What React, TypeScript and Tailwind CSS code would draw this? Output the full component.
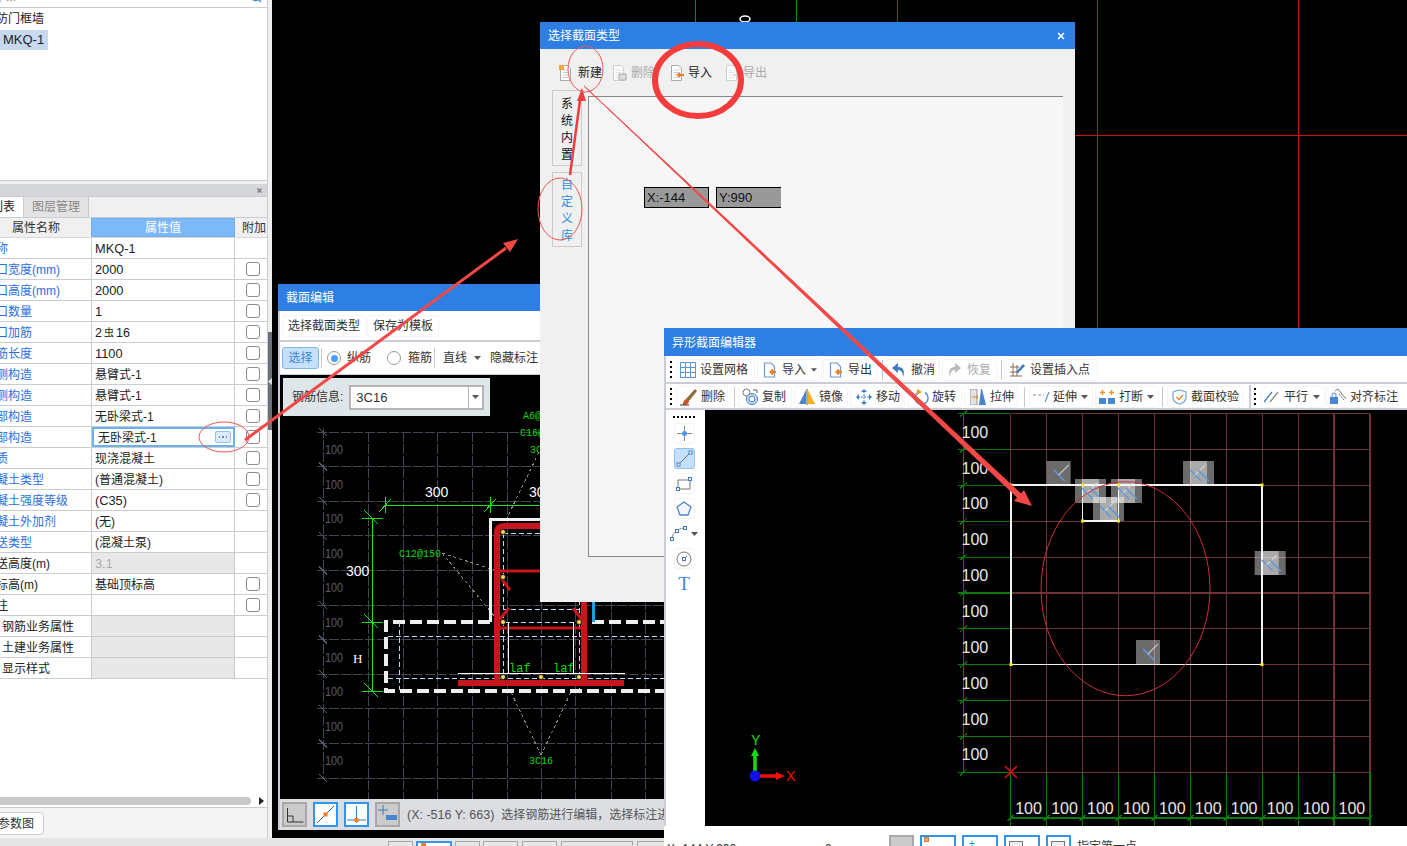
import React from 'react';
import { Search, X } from 'lucide-react';

type Row = {
  label: string;
  value?: string;
  check?: boolean;
  black?: boolean;
  gray?: boolean;
  flush?: boolean;
};

const ROWS: Row[] = [
  { label: '名称', value: 'MKQ-1' },
  { label: '洞口宽度(mm)', value: '2000', check: true },
  { label: '洞口高度(mm)', value: '2000', check: true },
  { label: '洞口数量', value: '1', check: true },
  { label: '洞口加筋', value: '2虫16', check: true },
  { label: '钢筋长度', value: '1100', check: true },
  { label: '内侧构造', value: '悬臂式-1', check: true },
  { label: '外侧构造', value: '悬臂式-1', check: true },
  { label: '顶部构造', value: '无卧梁式-1', check: true },
  { label: '底部构造', value: '无卧梁式-1', check: true },
  { label: '材质', value: '现浇混凝土', check: true },
  { label: '混凝土类型', value: '(普通混凝土)', check: true },
  { label: '混凝土强度等级', value: '(C35)', check: true },
  { label: '混凝土外加剂', value: '(无)' },
  { label: '泵送类型', value: '(混凝土泵)' },
  { label: '泵送高度(m)', value: '3.1', black: true, gray: true },
  { label: '底标高(m)', value: '基础顶标高', check: true, black: true },
  { label: '备注', value: '', check: true, black: true },
  { label: '钢筋业务属性', black: true, gray: true, flush: true },
  { label: '土建业务属性', black: true, gray: true, flush: true },
  { label: '显示样式', black: true, gray: true, flush: true },
];

const CAD_Y = Array.from({ length: 11 }, (_, i) => 432 + i * 34.6);
const CAD_X = [368, 403, 437, 472, 507, 541, 575, 611, 645];
const CAD_LABEL_Y = [449, 484, 518, 553, 587, 622, 657, 691, 726, 760];
const GRID_X = Array.from({ length: 11 }, (_, i) => 1010.7 + i * 35.93);
const GRID_Y = Array.from({ length: 11 }, (_, i) => 413.7 + i * 35.85);
const SECTION_POINTS = [
  [1011, 485],
  [1262, 485],
  [1262, 664.6],
  [1011, 664.6],
  [1082.6, 485],
  [1118.5, 485],
  [1082.6, 521],
  [1118.5, 521],
];
const MARKERS = [
  { x: 1046.7, y: 461, double: false },
  { x: 1075, y: 479, double: true },
  { x: 1111, y: 479, double: true },
  { x: 1093, y: 497, double: true },
  { x: 1183, y: 461, double: true },
  { x: 1254.7, y: 551, double: true },
  { x: 1136, y: 640, double: false },
];

const Caret = ({ className = '' }: { className?: string }) => (
  <svg width="7" height="4" viewBox="0 0 7 4" className={className}>
    <path d="M0 0h7L3.5 4z" fill="#555" />
  </svg>
);

const Grip = ({ className = '' }: { className?: string }) => (
  <div className={`flex h-[17px] w-[10px] flex-col justify-between ${className}`}>
    {[0, 1, 2, 3].map((i) => (
      <div key={i} className="h-[2px] w-[2px] bg-black" />
    ))}
  </div>
);

const Sep = ({ className = '' }: { className?: string }) => (
  <div className={`h-[20px] w-px shrink-0 bg-[#c6c9ce] ${className}`} />
);

const Btn = ({
  icon,
  label,
  muted,
  caret,
  className = '',
}: {
  icon?: React.ReactNode;
  label: string;
  muted?: boolean;
  caret?: boolean;
  className?: string;
}) => (
  <div
    className={`flex h-[22px] shrink-0 items-center rounded-[3px] border border-[#f5f5f5] ${
      muted ? 'text-[#aaa]' : 'text-[#333]'
    } ${className}`}
  >
    {icon}
    <span className="whitespace-nowrap">{label}</span>
    {caret && <Caret className="mr-[4px] ml-auto" />}
  </div>
);

const FileIcon = ({ muted, arrow = true }: { muted?: boolean; arrow?: boolean }) => (
  <svg width="14" height="16" viewBox="0 0 14 16" className="shrink-0">
    <path
      d="M1.5 1h6.5l3.5 3.5V15h-10z"
      fill="#fff"
      stroke={muted ? '#ccc' : '#6b9bd6'}
      strokeWidth="1.2"
    />
    {arrow && <path d="M13 10H8M10 7.5 7.5 10l2.5 2.5" stroke={muted ? '#ddd' : '#ee7f22'} strokeWidth="2" fill="none" />}
  </svg>
);

const GrayDoc = ({ muted, children }: { muted?: boolean; children?: React.ReactNode }) => (
  <svg width="15" height="16" viewBox="0 0 15 16" className="shrink-0">
    <path d="M1.5.5h7l3 3v12h-10z" fill="#fff" stroke={muted ? '#cfcfcf' : '#aaa'} />
    <path d="M3.5 5h6M3.5 7.500h6M3.500 10h6M3.500 12.500h6" stroke={muted ? '#e2e2e2' : '#ccc'} />
    {children}
  </svg>
);

const ToolFrame = ({ children, active }: { children: React.ReactNode; active?: boolean }) => (
  <div
    className={`flex h-[21px] w-[21px] shrink-0 items-center justify-center rounded-[3px] border ${
      active ? 'border-[#8fc0f5] bg-[#c5e0fb]' : 'border-[#f3f3f3] bg-white'
    }`}
  >
    {children}
  </div>
);

const CellValue = ({ value = '' }: { value?: string }) => {
  if (value === '2虫16') {
    return (
      <span className="text-[12.500px]">
        2<span className="relative -top-[1px] mx-[2px] text-[10px]">虫</span>16
      </span>
    );
  }
  return <span className={/^[\x20-\x7e]*$/.test(value) ? 'text-[12.800px]' : ''}>{value}</span>;
};

const PropertyRow = ({ row, selected }: { row: Row; selected: boolean }) => (
  <div className="flex h-[21px] border-b border-[#c9ccd1] leading-[22px]">
    <div className="w-[92px] shrink-0 overflow-hidden border-r border-[#c9ccd1]">
      <div
        className={`whitespace-nowrap ${row.flush ? 'ml-[2px]' : '-ml-[16px]'} ${
          row.black ? 'text-[#222]' : 'text-[#2b6ee0]'
        }`}
      >
        {row.label}
      </div>
    </div>
    {selected ? (
      <div className="flex w-[143px] shrink-0 items-center border-2 border-[#6db0ee] pl-[4px] text-[#222]">
        <span className="pt-[1px]">{row.value}</span>
        <div className="mr-[2px] ml-auto flex h-[12px] w-[16px] items-center justify-center gap-[2px] rounded-[2px] border border-[#8fc0f5] bg-[#dcecfc]">
          <div className="h-[1.500px] w-[1.500px] bg-[#5e86c0]" />
          <div className="h-[1.500px] w-[1.500px] bg-[#5e86c0]" />
          <div className="h-[1.500px] w-[1.500px] bg-[#5e86c0]" />
        </div>
      </div>
    ) : (
      <div
        className={`w-[143px] shrink-0 border-r border-[#c9ccd1] pl-[3px] ${
          row.gray ? 'bg-[#e8e8e8] text-[#aaa]' : 'text-[#222]'
        }`}
      >
        <CellValue value={row.value} />
      </div>
    )}
    <div className="flex flex-1 items-center justify-center pl-[4px]">
      {row.check && <div className="h-[14px] w-[14px] rounded-[3px] border border-[#8a8a8a] bg-white" />}
    </div>
  </div>
);

const LeftPanel = () => (
  <aside className="flex w-[268px] shrink-0 flex-col overflow-hidden border-r border-[#c9ccd1] bg-[#f0f0f0]">
    <div className="relative h-[8px] shrink-0 overflow-hidden border-b border-[#c9ccd1] bg-white">
      <div className="-mt-[12px] -ml-[6px] text-[#888]">单...</div>
      <Search className="absolute -top-[9px] right-[5px] h-[12px] w-[12px] text-[#3d8fd6]" strokeWidth={3} />
    </div>
    <div className="h-[173px] shrink-0 overflow-hidden border-b border-[#c9ccd1] bg-white pt-[1px]">
      <div className="-ml-[16px] h-[20px] leading-[20px] whitespace-nowrap text-[#222]">人防门框墙</div>
      <div className="mt-[1px] h-[20px] w-[48px] bg-[#c8d8f0] pl-[3px] text-[13px] leading-[20px] text-[#222]">MKQ-1</div>
    </div>
    <div className="h-[3px] shrink-0" />
    <div className="flex h-[12px] shrink-0 items-center justify-end bg-[#d4d6da] pr-[4px]">
      <X className="h-[7px] w-[7px] text-[#777]" strokeWidth={4} />
    </div>
    <div className="flex h-[22px] shrink-0 border-y border-[#c9ccd1] bg-[#f0f0f0] leading-[20px]">
      <div className="w-[24px] overflow-hidden border-r border-[#c9ccd1] bg-white">
        <div className="-ml-[33px] whitespace-nowrap text-[#222]">属性列表</div>
      </div>
      <div className="w-[65px] border-r border-[#c9ccd1] bg-[#e3e3e3] pl-[8px] text-[#888]">图层管理</div>
    </div>
    <div className="flex h-[20px] shrink-0 border-b border-[#d8d8d8] bg-[#f0f0f0] leading-[21px]">
      <div className="w-[91px] pl-[12px] text-[#333]">属性名称</div>
      <div className="w-[144px] border border-[#6db0ee] bg-[#7db8f8] text-center leading-[19px] text-white">属性值</div>
      <div className="pl-[7px] text-[#333]">附加</div>
    </div>
    <div className="flex-1 bg-white">
      {ROWS.map((row, i) => (
        <PropertyRow key={row.label} row={row} selected={i === 9} />
      ))}
    </div>
    <div className="flex h-[14px] shrink-0 items-start border-b border-[#c9ccd1] bg-white pt-[3px]">
      <div className="h-[8px] w-[251px] rounded-r-full bg-[#c8c8c8]" />
      <svg width="5" height="8" viewBox="0 0 5 8" className="ml-[8px]">
        <path d="M0 0l5 4-5 4z" fill="#222" />
      </svg>
    </div>
    <div className="h-[30px] shrink-0 bg-[#f4f4f4] pt-[4px]">
      <div className="-ml-[4px] h-[23px] w-[48px] rounded-[4px] border border-[#c9ccd1] bg-white pl-[1px] leading-[22px] text-[#333]">
        参数图
      </div>
    </div>
  </aside>
);

const CadDrawing = () => (
  <svg
    width="384"
    height="424"
    viewBox="280 375 384 424"
    className="block"
    fontFamily="'Liberation Sans', sans-serif"
    shapeRendering="crispEdges"
  >
    <g stroke="#3f4552" strokeDasharray="10 2">
      {CAD_Y.map((y) => (
        <line key={y} x1="317" x2="664" y1={y} y2={y} />
      ))}
      <line x1="323" x2="323" y1="428" y2="778" />
      {CAD_X.map((x) => (
        <line key={x} x1={x} x2={x} y1="432" y2="799" />
      ))}
    </g>
    <g stroke="#5a6070">
      {CAD_Y.map((y) => (
        <line key={y} x1="319" x2="327" y1={y - 4} y2={y + 4} />
      ))}
    </g>
    {CAD_LABEL_Y.map((y) => (
      <text key={y} x="325" y={y + 5} fontSize="12" fill="#5a5f6a" textLength="18" lengthAdjust="spacingAndGlyphs">
        100
      </text>
    ))}

    <g stroke="#1fe01f" fill="none">
      <path d="M372 518v174M385 505h155M362 518h21M362 622h21M362 691h21" />
      <path d="M385 497v16M490 497v16M379 512l12-13M484 512l12-13M364 510l14 14M364 614l14 14M364 683l14 14" />
    </g>
    <g fill="#fff" fontSize="14">
      <text x="425" y="497">300</text>
      <text x="529" y="497">300</text>
      <text x="346" y="576">300</text>
      <text x="353" y="663" fontFamily="'Liberation Serif', serif" fontSize="13">H</text>
    </g>
    <g fill="#10d810" fontFamily="'Liberation Mono', monospace" fontSize="10">
      <text x="399" y="557">C12@150</text>
      <text x="523" y="419">A6@200</text>
      <text x="520" y="436">C16@200</text>
      <text x="530" y="453">3C16</text>
      <text x="529" y="764">3C16</text>
      <text x="509" y="672" fontSize="12">laf</text>
      <text x="553" y="672" fontSize="12">laf</text>
    </g>

    <g stroke="#888" strokeDasharray="3 3" fill="none">
      <path d="M442 553l55 18M442 553l58 70M541 755l-31-65M541 755l31-65M506 520l34-70" />
    </g>
    <path d="M490 622V519h60" stroke="#f2f2f2" strokeWidth="3" fill="none" />
    <path d="M490 622H386v69h278M592 622h72" stroke="#efefef" strokeWidth="4" strokeDasharray="12 5" fill="none" />
    <g stroke="#bcdcff" strokeDasharray="5 3" fill="none">
      <path d="M503 533v148M579 600v90M399 622v68M503 533h40M503 609h77M388 636h276M388 678h276M505 622h72" />
    </g>
    <path d="M593 602v20" stroke="#0ea5e9" strokeWidth="3" />
    <g stroke="#c8161d" fill="none" shapeRendering="auto">
      <path d="M497 680V533q0-7 7-7h40" strokeWidth="6" />
      <path d="M584 680v-84" strokeWidth="6" />
      <path d="M458 683h166" strokeWidth="6" />
      <path d="M498 571h44M498 628h84" strokeWidth="3" />
      <path d="M499 575l11 15M499 620l10-12M582 620l-9-12" strokeWidth="3" />
    </g>
    <path d="M508 622v51M573 622v51M458 673h167" stroke="#fff" fill="none" />
    <g fill="#ffd84a" stroke="#222" shapeRendering="auto">
      {[
        [503, 532],
        [503, 577],
        [503, 622],
        [579, 622],
        [503, 677],
        [541, 677],
        [579, 677],
      ].map(([x, y]) => (
        <circle key={`${x}-${y}`} cx={x} cy={y} r="2.500" />
      ))}
    </g>
  </svg>
);

const SectionEditor = () => (
  <section className="absolute top-[284px] left-[278px] flex h-[546px] w-[386px] flex-col border-l-2 border-[#c9ced6] bg-[#dcdde0] text-[12px]">
    <div className="-ml-[2px] flex h-[27px] shrink-0 items-center bg-[#2d7fe3] pl-[8px] text-white">截面编辑</div>
    <div className="flex h-[29px] shrink-0 items-center bg-white pt-[1px]">
      <Btn label="选择截面类型" className="ml-[2px] w-[84px] justify-center" />
      <Btn label="保存为模板" className="ml-[1px] w-[72px] justify-center" />
    </div>
    <div className="h-[2px] shrink-0 bg-[#c9ced6]" />
    <div className="flex h-[33px] shrink-0 items-center border-b border-[#c9ced6] bg-white text-[#333]">
      <div className="ml-[2px] flex h-[22px] w-[37px] items-center justify-center rounded-[3px] border border-[#7fb6ef] bg-[#c5e0fb] text-[#3a86d8]">
        选择
      </div>
      <Sep className="ml-[2px]" />
      <div className="ml-[5px] flex h-[14px] w-[14px] items-center justify-center rounded-full border border-[#999]">
        <div className="h-[7px] w-[7px] rounded-full bg-[#4a9eff]" />
      </div>
      <span className="ml-[6px]">纵筋</span>
      <div className="ml-[16px] h-[14px] w-[14px] rounded-full border border-[#999]" />
      <span className="ml-[7px]">箍筋</span>
      <Sep className="ml-[2px]" />
      <span className="ml-[8px]">直线</span>
      <Caret className="ml-[7px]" />
      <span className="ml-[9px] whitespace-nowrap">隐藏标注</span>
    </div>
    <div className="relative h-[424px] shrink-0 overflow-hidden bg-black">
      <CadDrawing />
      <div className="absolute top-[3px] left-[3px] flex h-[38px] w-[207px] items-center bg-[#dfe6e9] pl-[9px] text-[#333]">
        钢筋信息:
        <div className="ml-[6px] flex h-[25px] w-[135px] items-center border-2 border-[#b4b4b4] bg-white pt-[2px] pl-[5px] text-[13px]">
          3C16
          <div className="-mt-[2px] ml-auto flex h-[21px] w-[14px] items-center justify-center border-l border-[#b4b4b4]">
            <Caret />
          </div>
        </div>
      </div>
    </div>
    <div className="flex h-[31px] shrink-0 items-center overflow-hidden pl-[2px]">
      <div className="flex h-[25px] w-[25px] shrink-0 items-center justify-center border-2 border-[#a8a8a8] bg-[#cbcbcb]">
        <svg width="18" height="16" viewBox="0 0 18 16">
          <path d="M1.500 1v14h16M1.500 9H7v6" stroke="#333" fill="none" />
        </svg>
      </div>
      <div className="ml-[6px] flex h-[25px] w-[25px] shrink-0 items-center justify-center border-2 border-[#2f96f0] bg-white">
        <svg width="21" height="21" viewBox="0 0 21 21">
          <path d="M2 19 19 2" stroke="#3d5f8f" />
          <rect x="8.500" y="8.500" width="4" height="4" fill="#ee7f22" />
        </svg>
      </div>
      <div className="ml-[6px] flex h-[25px] w-[25px] shrink-0 items-center justify-center border-2 border-[#2f96f0] bg-white">
        <svg width="21" height="21" viewBox="0 0 21 21">
          <path d="M10.500 2v17M1 16h19" stroke="#3d78c0" />
          <rect x="8.500" y="14" width="4" height="4" fill="#ee7f22" />
        </svg>
      </div>
      <div className="ml-[6px] flex h-[25px] w-[25px] shrink-0 items-center justify-center border-2 border-[#a8a8a8] bg-[#cbcbcb]">
        <svg width="21" height="21" viewBox="0 0 21 21">
          <path d="M6 1v10M1 6h10" stroke="#3d78c0" />
          <rect x="9" y="11" width="11" height="5" fill="#4a86d0" />
        </svg>
      </div>
      <span className="ml-[7px] pt-[1px] text-[12.500px] whitespace-nowrap text-[#555]">(X: -516 Y: 663)</span>
      <span className="ml-[7px] pt-[1px] whitespace-nowrap text-[#555]">选择钢筋进行编辑，选择标注进行编辑</span>
    </div>
  </section>
);

const TypeDialog = () => (
  <section className="absolute top-[22px] left-[540px] flex h-[580px] w-[535px] flex-col bg-[#f0f0f0] text-[12px]">
    <div className="flex h-[27px] shrink-0 items-center justify-between bg-[#2d7fe3] pr-[9px] pl-[8px] text-white">
      选择截面类型
      <X className="h-[10px] w-[10px] text-white" strokeWidth={4} />
    </div>
    <div className="flex h-[41px] shrink-0 items-center pt-[7px] pl-[19px]">
      <GrayDoc>
        <rect x="0" y="0" width="5" height="5" fill="#f3a83a" />
      </GrayDoc>
      <span className="ml-[4px] text-[#222]">新建</span>
      <div className="ml-[10px]">
        <GrayDoc muted>
          <path d="M7 9h7v6H7z" fill="#ddd" stroke="#aaa" />
        </GrayDoc>
      </div>
      <span className="ml-[4px] text-[#aaa]">删除</span>
      <div className="ml-[15px]">
        <GrayDoc>
          <path d="M14 10H8M10 8l-2 2 2 2" stroke="#ee7f22" strokeWidth="2" fill="none" />
        </GrayDoc>
      </div>
      <span className="ml-[3px] text-[#222]">导入</span>
      <div className="ml-[13px]">
        <GrayDoc muted>
          <path d="M8 10h6M12 8l2 2-2 2" stroke="#ddd" strokeWidth="2" fill="none" />
        </GrayDoc>
      </div>
      <span className="ml-[3px] text-[#aaa]">导出</span>
    </div>
    <div className="flex flex-1 items-start pl-[12px]">
      <div className="flex w-[30px] shrink-0 flex-col gap-[6px]">
        <div className="h-[76px] border border-[#cccccc] pt-[5px] text-center leading-[17px] text-[#111]">
          <div className="mx-auto w-[12px] break-all">系统内置</div>
        </div>
        <div className="h-[75px] border border-[#cccccc] pt-[4px] text-center leading-[17px] text-[#2f8fe0]">
          <div className="mx-auto w-[12px] break-all">自定义库</div>
        </div>
      </div>
      <div className="mt-[6px] ml-[6px] flex h-[461px] w-[475px] items-start gap-[7px] border-y border-l border-[#888] bg-[#f6f6f6] pt-[90px] pl-[55px] text-[13px] text-[#111]">
        <div className="flex h-[21px] w-[65px] items-center border border-black bg-[#999] pl-[2px]">X:-144</div>
        <div className="flex h-[21px] w-[65px] items-center border-y border-l border-black bg-[#999] pl-[2px]">Y:990</div>
      </div>
    </div>
  </section>
);

const GridDrawing = () => (
  <svg
    width="702"
    height="416"
    viewBox="705 410 702 416"
    className="block"
    fontFamily="'Liberation Sans', sans-serif"
  >
    <g stroke="#6b3338" strokeWidth="1.200" shapeRendering="crispEdges">
      {GRID_X.map((x) => (
        <line key={x} x1={x} x2={x} y1="413.700" y2="772" />
      ))}
      {GRID_Y.map((y) => (
        <line key={y} x1="1010.700" x2="1370" y1={y} y2={y} />
      ))}
    </g>
    <g stroke="#0a7a0a" strokeWidth="1.200" shapeRendering="crispEdges">
      <line x1="963.500" x2="963.500" y1="413.700" y2="772" />
      <line x1="1010.700" x2="1370" y1="818" y2="818" />
      {GRID_Y.map((y) => (
        <g key={y}>
          <line x1="958" x2="1010" y1={y} y2={y} />
          <line x1="960" x2="967" y1={y + 3} y2={y - 3} />
        </g>
      ))}
      {GRID_X.map((x) => (
        <g key={x}>
          <line x1={x} x2={x} y1="772" y2="826" />
          <line x1={x - 3} x2={x + 3} y1="821" y2="815" />
        </g>
      ))}
    </g>
    <g fill="#e8e8e8" fontSize="16">
      {GRID_Y.slice(0, 10).map((y) => (
        <text key={y} x="961.500" y={y + 24}>
          100
        </text>
      ))}
      {GRID_X.slice(0, 10).map((x) => (
        <text key={x} x={x + 4.5} y="814">
          100
        </text>
      ))}
    </g>
    <path d="M1005 766l12 12M1017 766l-12 12" stroke="#e01010" strokeWidth="1.500" />

    <path
      d="M1011 485h251v179.600H1011zM1082.600 485v36h35.900v-36"
      fill="none"
      stroke="#f2f2f2"
      strokeWidth="1.600"
      shapeRendering="crispEdges"
    />
    {MARKERS.map((m) => (
      <g key={`${m.x}-${m.y}`}>
        <rect x={m.x} y={m.y} width="24" height="24" fill="#fff" opacity="0.42" />
        {m.double && <rect x={m.x + 7} y={m.y} width="24" height="24" fill="#fff" opacity="0.42" />}
        <path d={`M${m.x + 7} ${m.y + 9}l11 11`} stroke="#5b9bdf" strokeWidth="1.500" />
        <path d={`M${m.x + 12} ${m.y + 14}l10-10`} stroke="#ddd" strokeWidth="1.500" opacity="0.7" />
        {m.double && <path d={`M${m.x + 15} ${m.y + 9}l11 11`} stroke="#5b9bdf" strokeWidth="1.500" />}
      </g>
    ))}
    {SECTION_POINTS.map(([x, y]) => (
      <rect key={`${x}-${y}`} x={x - 1.5} y={y - 1.5} width="3" height="3" fill="#ffe81a" />
    ))}
    <ellipse cx="1125.500" cy="588.700" rx="84.500" ry="107" fill="none" stroke="#c93036" />

    <path d="M755 772v-16" stroke="#10e010" strokeWidth="3.500" />
    <path d="M755 748l-4 8h8z" fill="#10e010" />
    <path d="M757 776h20" stroke="#f01010" strokeWidth="3.500" />
    <path d="M785 776l-9-4v8z" fill="#f01010" />
    <circle cx="755" cy="776" r="5.500" fill="#1010e8" />
    <text x="751" y="745" fontSize="14" fill="#10e010">
      Y
    </text>
    <text x="786" y="781" fontSize="14" fill="#f01010">
      X
    </text>
  </svg>
);

const ShapeEditor = () => (
  <section className="absolute top-[328px] left-[664px] flex h-[518px] w-[743px] flex-col border-l-2 border-[#c9ced6] bg-[#c9ced6] text-[12px]">
    <div className="-ml-[2px] flex h-[28px] shrink-0 items-center bg-[#2d7fe3] pt-[2px] pl-[8px] text-white">异形截面编辑器</div>
    <div className="flex h-[26px] shrink-0 items-center bg-white pt-[1px]">
      <Grip className="pl-[4px]" />
      <Btn
        label="设置网格"
        className="w-[79px] gap-[4px] pl-[3px]"
        icon={
          <svg width="16" height="16" viewBox="0 0 16 16" className="shrink-0">
            <path d="M.5.500h15v15H.500zM5.500.500v15M10.500.500v15M.500 5.500h15M.500 10.500h15" stroke="#5a96d8" fill="none" />
          </svg>
        }
      />
      <Btn label="导入" caret className="ml-[2px] w-[65px] gap-[5px] pl-[5px]" icon={<FileIcon />} />
      <Btn label="导出" className="ml-[1px] w-[55px] gap-[5px] pl-[5px]" icon={<FileIcon />} />
      <Sep className="ml-[4px]" />
      <Btn
        label="撤消"
        className="ml-[3px] w-[54px] gap-[6px] pl-[5px]"
        icon={
          <svg width="13" height="14" viewBox="0 0 13 14" className="shrink-0">
            <path d="M6 0 0 5l6 5V7c3 0 5 2 5 7 2-5 1-10-5-10z" fill="#3f7cc4" />
          </svg>
        }
      />
      <Btn
        label="恢复"
        muted
        className="ml-[2px] w-[55px] gap-[6px] pl-[5px]"
        icon={
          <svg width="13" height="14" viewBox="0 0 13 14" className="shrink-0">
            <path d="M7 0l6 5-6 5V7c-3 0-5 2-5 7-2-5-1-10 5-10z" fill="#bbb" />
          </svg>
        }
      />
      <Sep className="ml-[4px]" />
      <Btn
        label="设置插入点"
        className="ml-[2px] w-[94px] gap-[5px] pl-[5px]"
        icon={
          <svg width="15" height="15" viewBox="0 0 15 15" className="shrink-0">
            <path d="M0 5h9M0 10h9M3 1v13M7 3v11M0 14h12" stroke="#8a6a5a" fill="none" />
            <path d="M6 10 13 2l2 2-7 7z" fill="#3f7cc4" />
          </svg>
        }
      />
    </div>
    <div className="h-[2px] shrink-0" />
    <div className="flex h-[24px] shrink-0 items-center bg-white pt-[1px]">
      <Grip className="pl-[4px]" />
      <Btn
        label="删除"
        className="w-[52px] gap-[3px] pl-[3px]"
        icon={
          <svg width="18" height="18" viewBox="0 0 18 18" className="shrink-0">
            <path d="M6 11 15 1l2 2-8 10z" fill="#8a6a3a" />
            <path d="M3 17c0-3 1-6 4-6l2 2c0 3-3 4-6 4z" fill="#d0501e" />
            <path d="M0 17h9" stroke="#333" />
          </svg>
        }
      />
      <Sep className="ml-[6px]" />
      <Btn
        label="复制"
        className="ml-[3px] w-[54px] gap-[3px] pl-[3px]"
        icon={
          <svg width="17" height="18" viewBox="0 0 17 18" className="shrink-0">
            <circle cx="4.500" cy="4.500" r="3.500" fill="#fff" stroke="#777" />
            <circle cx="10" cy="11" r="5.500" fill="#cfe3f8" stroke="#3f7cc4" />
            <circle cx="10" cy="11" r="3" fill="#fff" stroke="#3f7cc4" />
            <path d="M11 2h4v3" stroke="#555" fill="none" />
          </svg>
        }
      />
      <Btn
        label="镜像"
        className="ml-[2px] w-[54px] gap-[4px] pl-[4px]"
        icon={
          <svg width="16" height="16" viewBox="0 0 16 16" className="shrink-0">
            <path d="M7 1v14H0z" fill="#4a86d0" />
            <path d="M9 1v14h7z" fill="#f5b21e" />
            <path d="M8 0v16" stroke="#555" />
          </svg>
        }
      />
      <Btn
        label="移动"
        className="ml-[2px] w-[55px] gap-[4px] pl-[5px]"
        icon={
          <svg width="16" height="16" viewBox="0 0 16 16" className="shrink-0">
            <path d="M8 2v12M2 8h12" stroke="#3f7cc4" strokeDasharray="2 1" />
            <path d="M8 0l3 3H5zM8 16l3-3H5zM0 8l3-3v6zM16 8l-3-3v6z" fill="#3f7cc4" />
          </svg>
        }
      />
      <Btn
        label="旋转"
        className="ml-[3px] w-[54px] gap-[3px] pl-[5px]"
        icon={
          <svg width="15" height="16" viewBox="0 0 15 16" className="shrink-0">
            <path d="M5 3a6.500 6.500 0 1 0 6 .5" stroke="#5a96d8" strokeWidth="1.500" fill="none" />
            <path d="M3 0v6l5-3z" fill="#ee9a22" />
          </svg>
        }
      />
      <Btn
        label="拉伸"
        className="ml-[2px] w-[54px] gap-[4px] pl-[5px]"
        icon={
          <svg width="16" height="16" viewBox="0 0 16 16" className="shrink-0">
            <path d="M0 0h7v16H0z" fill="#e2e2e2" stroke="#999" />
            <path d="M9 16 11 0h1l4 16z" fill="#4a86d0" />
            <path d="M2 8h6M6 6l2 2-2 2" stroke="#ee7f22" fill="none" />
          </svg>
        }
      />
      <Sep className="ml-[6px]" />
      <Btn
        label="延伸"
        caret
        className="ml-[4px] w-[64px] gap-[3px] pl-[3px]"
        icon={
          <svg width="17" height="12" viewBox="0 0 17 12" className="shrink-0">
            <path d="M0 4h11" stroke="#888" strokeDasharray="3 2" />
            <path d="M12 11 16 1" stroke="#3f7cc4" />
          </svg>
        }
      />
      <Btn
        label="打断"
        caret
        className="ml-[2px] w-[64px] gap-[3px] pl-[3px]"
        icon={
          <svg width="17" height="16" viewBox="0 0 17 16" className="shrink-0">
            <path d="M0 9h7v6H0zM9 9h7v6H9z" fill="#4a86d0" />
            <path d="M3.500 1v5M1 3.500h5M12.500 1v5M10 3.500h5" stroke="#ee9a22" strokeWidth="1.500" />
          </svg>
        }
      />
      <Sep className="ml-[3px]" />
      <Btn
        label="截面校验"
        className="ml-[4px] w-[76px] gap-[4px] pl-[4px]"
        icon={
          <svg width="15" height="16" viewBox="0 0 15 16" className="shrink-0">
            <path d="M7.500 1 14 3v5c0 4-3 6-6.500 7C4 14 1 12 1 8V3z" fill="#fff" stroke="#7da9da" strokeWidth="1.300" />
            <path d="M4.500 8l2.500 2.500 4-4.500" stroke="#ee7f22" strokeWidth="1.300" fill="none" />
          </svg>
        }
      />
      <div className="ml-[6px] h-full w-[2px] shrink-0 bg-[#c9ced6]" />
      <Grip className="pl-[3px]" />
      <Btn
        label="平行"
        caret
        className="w-[64px] gap-[5px] pl-[2px]"
        icon={
          <svg width="15" height="12" viewBox="0 0 15 12" className="shrink-0">
            <path d="M0 11 8 1" stroke="#3f7cc4" strokeWidth="1.300" />
            <path d="M6 11 14 1" stroke="#888" strokeWidth="1.300" />
          </svg>
        }
      />
      <Btn
        label="对齐标注"
        className="ml-[1px] w-[72px] gap-[3px] pl-[3px] whitespace-nowrap"
        icon={
          <svg width="17" height="17" viewBox="0 0 17 17" className="shrink-0">
            <rect x="0" y="9" width="8" height="7" fill="#4a86d0" />
            <path d="M2 9V7a2 2 0 0 1 4 0v2" stroke="#4a86d0" fill="none" />
            <path d="M5 3l3-2 8 10" stroke="#777" fill="none" />
            <path d="M9 6l5 6" stroke="#3f7cc4" strokeDasharray="2 1" />
          </svg>
        }
      />
    </div>
    <div className="h-[2px] shrink-0" />
    <div className="flex h-[416px] shrink-0">
      <div className="flex w-[39px] shrink-0 flex-col items-center gap-[4px] bg-white pt-[6px] pr-[3px]">
        <div className="mb-[1px] flex w-[22px] justify-between">
          {[0, 1, 2, 3, 4, 5].map((i) => (
            <div key={i} className="h-[2px] w-[2px] bg-black" />
          ))}
        </div>
        <ToolFrame>
          <svg width="15" height="15" viewBox="0 0 15 15">
            <path d="M7.500 0v5M7.500 10v5M0 7.500h5M10 7.500h5" stroke="#888" />
            <circle cx="7.500" cy="7.500" r="2.500" fill="#4a96ea" />
          </svg>
        </ToolFrame>
        <ToolFrame active>
          <svg width="17" height="17" viewBox="0 0 17 17">
            <path d="M3 14 14 3" stroke="#66778f" />
            <rect x="1" y="13" width="3" height="3" fill="#fff" stroke="#3f7cc4" />
            <rect x="13" y="1" width="3" height="3" fill="#fff" stroke="#3f7cc4" />
          </svg>
        </ToolFrame>
        <ToolFrame>
          <svg width="16" height="14" viewBox="0 0 16 14">
            <path d="M2 3h12v9H2z" fill="none" stroke="#777" />
            <rect x="0.500" y="10.500" width="3" height="3" fill="#fff" stroke="#3f7cc4" />
            <rect x="12.500" y="0.500" width="3" height="3" fill="#fff" stroke="#3f7cc4" />
          </svg>
        </ToolFrame>
        <ToolFrame>
          <svg width="16" height="15" viewBox="0 0 16 15">
            <path d="M8 1l7 5-3 8H4L1 6z" fill="#f2f7fd" stroke="#4a86d0" strokeWidth="1.300" />
          </svg>
        </ToolFrame>
        <div className="flex h-[21px] w-[30px] items-center justify-center">
          <svg width="20" height="15" viewBox="0 0 20 15">
            <path d="M2 13c0-6 5-10 12-11" stroke="#888" fill="none" />
            <rect x="0.500" y="11.500" width="3" height="3" fill="#fff" stroke="#3f7cc4" />
            <rect x="5.500" y="3.500" width="3" height="3" fill="#fff" stroke="#3f7cc4" />
            <rect x="13.500" y="0.500" width="3" height="3" fill="#fff" stroke="#3f7cc4" />
          </svg>
          <Caret className="ml-[1px]" />
        </div>
        <ToolFrame>
          <svg width="16" height="16" viewBox="0 0 16 16">
            <circle cx="8" cy="8" r="7" fill="none" stroke="#777" />
            <path d="M8 8l3-3" stroke="#777" />
            <rect x="6.500" y="6.500" width="3" height="3" fill="#fff" stroke="#3f7cc4" />
          </svg>
        </ToolFrame>
        <div className="mt-[1px] flex h-[21px] w-[21px] items-center justify-center font-['Liberation_Serif',serif] text-[19px] text-[#3f86d4]">T</div>
      </div>
      <div className="flex-1 overflow-hidden bg-black">
        <GridDrawing />
      </div>
    </div>
    <div className="relative -ml-[2px] h-[20px] shrink-0 overflow-hidden bg-white">
      <div className="flex items-start">
        <span className="mt-[14px] ml-[3px] w-[158px] shrink-0 text-[#333]">X:-144 Y:990</span>
        <span className="mt-[14px] w-[64px] shrink-0 text-[#333]">0</span>
        <div className="mt-[9px] h-[24px] w-[25px] shrink-0 border-2 border-[#a8a8a8] bg-[#cbcbcb]" />
        <div className="mt-[9px] ml-[6px] h-[24px] w-[36px] shrink-0 border-2 border-[#2f96f0] pl-[2px]">
          <div className="h-[5px] w-[5px] border border-[#d9772a] bg-[#f6a96a]" />
        </div>
        <div className="mt-[9px] ml-[6px] h-[24px] w-[36px] shrink-0 border-2 border-[#2f96f0] pt-[3px] pl-[5px] text-[10px] leading-[8px] text-[#3f7cc4]">+</div>
        <div className="mt-[9px] ml-[6px] h-[24px] w-[36px] shrink-0 border-2 border-[#2f96f0] pt-[4px] pl-[3px]">
          <div className="h-[7px] w-[14px] border border-[#777] bg-[#eee]" />
        </div>
        <div className="mt-[9px] ml-[6px] h-[24px] w-[25px] shrink-0 border-2 border-[#2f96f0] pt-[4px] pl-[3px]">
          <div className="h-[7px] w-[14px] border border-[#777] bg-[#eee]" />
        </div>
        <span className="mt-[12px] ml-[6px] whitespace-nowrap text-[#333]">指定第一点</span>
      </div>
    </div>
  </section>
);

const Annotations = () => (
  <svg width="1407" height="846" viewBox="0 0 1407 846" className="pointer-events-none absolute top-0 left-0" fill="none">
    <ellipse cx="698" cy="80" rx="43" ry="36" stroke="#f43c3c" strokeWidth="6" />
    <ellipse cx="585.500" cy="69" rx="17.500" ry="23" stroke="#ee5555" />
    <ellipse cx="560" cy="209" rx="22" ry="31" stroke="#ee5555" />
    <ellipse cx="224" cy="437" rx="25" ry="15" stroke="#ee5555" />
    <path d="M570 175 580 100" stroke="#f43c3c" strokeWidth="2.500" />
    <path d="M582 88l-5 13h9z" fill="#f43c3c" />
    <path d="M245 440 506 248" stroke="#f44848" strokeWidth="3" />
    <path d="M518 239l-15 4 7 9z" fill="#f44848" />
    <path d="M584 86 1021 494 1018 498z" fill="#f44848" stroke="#f44848" strokeWidth="1" />
    <path d="M1032 506l-8-16-10 11z" fill="#f44848" />
  </svg>
);

export default function App() {
  return (
    <div className="relative flex h-[846px] w-[1407px] flex-col overflow-hidden bg-black font-['Liberation_Sans','Noto_Sans_CJK_SC',sans-serif] text-[12px]">
      <div className="flex h-[838px] shrink-0">
        <LeftPanel />
        <div className="flex w-[4px] shrink-0 flex-col bg-[#f0f0f0]">
          <div className="h-[332px]" />
          <div className="flex h-[98px] items-center bg-[#6b7078]">
            <svg width="4" height="7" viewBox="0 0 4 7">
              <path d="M4 0v7L0 3.500z" fill="#ddd" />
            </svg>
          </div>
        </div>
        <div className="flex-1" />
      </div>
      <div className="flex h-[8px] shrink-0 bg-[#e6e6e6] pt-[3px] pl-[388px]">
        <div className="h-[10px] w-[25px] border border-[#a8a8a8]" />
        <div className="ml-[3px] h-[10px] w-[36px] border-2 border-[#2f96f0] bg-white pl-[3px]">
          <div className="h-[3px] w-[5px] bg-[#ee7f22]" />
        </div>
        <div className="ml-[3px] h-[10px] w-[25px] border border-[#a8a8a8]" />
        <div className="ml-[3px] h-[10px] w-[35px] border border-[#a8a8a8]" />
        <div className="ml-[4px] h-[10px] w-[35px] border border-[#a8a8a8]" />
        <div className="ml-[4px] h-[10px] w-[72px] border border-[#a8a8a8]" />
        <div className="ml-[4px] h-[10px] w-[40px] border border-[#a8a8a8]" />
      </div>

      <svg
        width="1135"
        height="328"
        viewBox="272 0 1135 328"
        className="absolute top-0 left-[272px]"
        shapeRendering="crispEdges"
      >
        <path d="M695 0v22M796 0v22" stroke="#0a8a0a" />
        <path d="M897 0v22" stroke="#d01010" />
        <path d="M1097 0v328M1298 0v328M1075 135h332" stroke="#d01010" />
        <ellipse cx="745" cy="19" rx="5" ry="3" stroke="#fff" fill="none" strokeWidth="1.500" shapeRendering="auto" />
      </svg>

      <SectionEditor />
      <TypeDialog />
      <ShapeEditor />
      <Annotations />
    </div>
  );
}
